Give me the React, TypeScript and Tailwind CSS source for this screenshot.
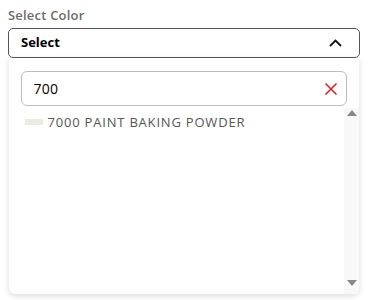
import { useState } from "react";

const options = [{ name: "7000 PAINT BAKING POWDER", swatch: "#ebebe3" }];

export default function App() {
  const [query, setQuery] = useState("700");

  return (
    <div className="w-[368px] h-[300px] bg-white px-2 pt-[6px] font-['Open_Sans',sans-serif]">
      <label className="block text-[13px] font-semibold leading-[18px] tracking-[0.2px] text-[#6c6c6c]">Select Color</label>
      <div className="mt-[4px] flex h-[30px] items-center justify-between rounded-[5px] border border-[#555] pl-3 pr-[17px]">
        <span className="text-[13px] font-bold text-black">Select</span>
        <svg width="13" height="8" viewBox="0 0 13 8" fill="none">
          <path d="M1 7L6.5 1.5L12 7" stroke="#111" strokeWidth="1.8" />
        </svg>
      </div>
      <div className="flex h-[236px] flex-col rounded-b-[6px] bg-white shadow-[0_2px_6px_rgba(0,0,0,0.14)] ml-[0.5px] mr-px">
        <div className="px-3 pt-[13px]">
          <div className="flex h-[35px] items-center rounded-[6px] border border-[#bcbcbc] pl-3 pr-2">
            <input
              value={query}
              onChange={(e) => setQuery(e.target.value)}
              className="w-full bg-transparent text-[14px] tracking-[0.3px] text-black outline-none"
            />
            <svg width="14" height="14" viewBox="0 0 14 14" className="shrink-0">
              <path d="M1.5 1.5L12.5 12.5M12.5 1.5L1.5 12.5" stroke="#e02020" strokeWidth="1.6" />
            </svg>
          </div>
        </div>
        <div className="mt-[2px] flex min-h-0 flex-1">
          <ul className="flex-1 pl-4 pt-[6px]">
            {options.map((o) => (
              <li key={o.name} className="flex items-center gap-[5px] text-[13px] leading-[16px] tracking-[0.8px] text-[#555]">
                <span className="h-[6px] w-[18px]" style={{ background: o.swatch }} />
                {o.name}
              </li>
            ))}
          </ul>
          <div className="flex w-[15px] flex-col items-center justify-between bg-[#f8f8f8] pb-[8px] pt-[2px]">
            <span className="h-0 w-0 border-x-[5px] border-b-[6px] border-x-transparent border-b-[#888]" />
            <span className="h-0 w-0 border-x-[5px] border-t-[6px] border-x-transparent border-t-[#888]" />
          </div>
        </div>
      </div>
    </div>
  );
}
